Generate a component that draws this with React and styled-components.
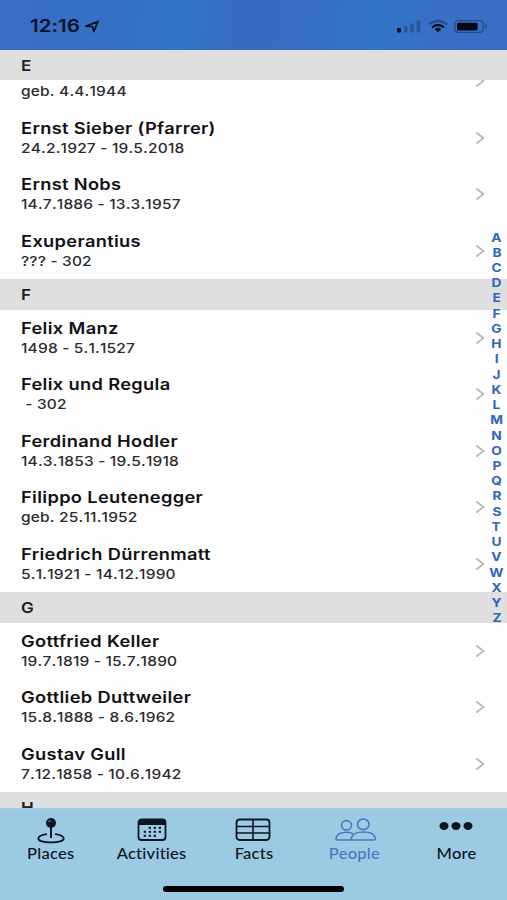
import React from "react";
import styled, { createGlobalStyle } from "styled-components";

const GlobalStyle = createGlobalStyle`
  * { box-sizing: border-box; }
  body { margin: 0; background: #fefefe; }
`;

const Screen = styled.div`
  width: 507px;
  height: 900px;
  display: flex;
  flex-direction: column;
  overflow: hidden;
  background: #fefefe;
  font-family: Inter, "Liberation Sans", sans-serif;
  font-variant-ligatures: none;
`;

const StatusBar = styled.header`
  flex: none;
  height: 49.5px;
  display: flex;
  justify-content: space-between;
  padding: 0 19px 0 30px;
  background: linear-gradient(100deg, #3a6fc6 0%, #356fc4 22%, #3275c6 36%, #386bc0 48%, #376dc2 60%, #3275c6 74%, #386fc4 85%, #3a6cc4 100%);
`;

const Clock = styled.div`
  display: flex;
  padding-top: 15px;
  gap: 14px;
  color: #06122a;
`;

const Time = styled.span`
  font-size: 17px;
  line-height: 23px;
  font-weight: 600;
  transform: scaleX(1.21);
  transform-origin: left;
`;

const StatusIcon = styled.svg`
  display: block;
  flex: none;
`;

const List = styled.main`
  position: relative;
  flex: none;
  height: 758.5px;
  overflow: hidden;
`;

const SectionHeader = styled.h2`
  margin: 0;
  height: 30.8px;
  padding-left: 21px;
  background: #dfdfdf;
  color: #202022;
  font-size: 15px;
  line-height: 32.5px;
  font-weight: 600;
`;

const Stretch = styled.span`
  display: inline-block;
  transform: scaleX(${(p) => p.$x});
  transform-origin: ${(p) => p.$origin || "left"};
  white-space: pre;
`;

const Row = styled.div`
  height: ${(p) => (p.$partial ? "29.2px" : "56.45px")};
  display: flex;
  align-items: flex-end;
  justify-content: space-between;
  padding: 0 22px 0 21px;
  overflow: hidden;
`;

const Person = styled.div`
  padding-bottom: 8px;
`;

const Name = styled.div`
  color: #111113;
  font-size: 16px;
  line-height: 20px;
  font-weight: 600;
  letter-spacing: 0.3px;
`;

const Dates = styled.div`
  color: #2b2b2d;
  font-size: 13.6px;
  line-height: 20px;
  font-weight: 450;
  font-kerning: none;
  letter-spacing: 0.16px;
`;

const Chevron = styled.svg`
  flex: none;
  display: block;
  margin-bottom: 21px;
`;

const LetterIndex = styled.nav`
  position: absolute;
  top: 180px;
  right: 0;
  width: 21px;
  display: flex;
  flex-direction: column;
  align-items: center;
  color: #2f66bd;
  font-size: 12px;
  line-height: 15.24px;
  font-weight: 650;
`;

const TabBar = styled.footer`
  flex: none;
  height: 92px;
  background: #9dcae3;
  border-top: 1px solid #a9cde3;
  font-family: Lato, "Liberation Sans", sans-serif;
`;

const Tabs = styled.nav`
  display: grid;
  grid-template-columns: repeat(5, 1fr);
  height: 76.5px;
`;

const Tab = styled.div`
  display: flex;
  flex-direction: column;
  align-items: center;
  color: ${(p) => (p.$active ? "#4579c5" : "#0b1722")};
  padding-top: 7px;
`;

const TabIcon = styled.svg`
  display: block;
  fill: none;
  stroke: currentColor;
  stroke-width: 1.8;
`;

const TabLabel = styled.span`
  font-size: 14.5px;
  line-height: 19px;
  font-weight: 500;
  letter-spacing: 0.2px;
`;

const HomeIndicator = styled.div`
  width: 181px;
  height: 6px;
  margin: 0 auto;
  border-radius: 3px;
  background: #000;
`;

const sections = [
  {
    letter: "E",
    people: [
      [null, "geb. 4.4.1944"],
      ["Ernst Sieber (Pfarrer)", "24.2.1927 - 19.5.2018"],
      ["Ernst Nobs", "14.7.1886 - 13.3.1957"],
      ["Exuperantius", "??? - 302"],
    ],
  },
  {
    letter: "F",
    people: [
      ["Felix Manz", "1498 - 5.1.1527"],
      ["Felix und Regula", " - 302"],
      ["Ferdinand Hodler", "14.3.1853 - 19.5.1918"],
      ["Filippo Leutenegger", "geb. 25.11.1952"],
      ["Friedrich Dürrenmatt", "5.1.1921 - 14.12.1990"],
    ],
  },
  {
    letter: "G",
    people: [
      ["Gottfried Keller", "19.7.1819 - 15.7.1890"],
      ["Gottlieb Duttweiler", "15.8.1888 - 8.6.1962"],
      ["Gustav Gull", "7.12.1858 - 10.6.1942"],
    ],
  },
  { letter: "H", people: [] },
];

function PersonRow({ name, dates }) {
  return (
    <Row $partial={!name}>
      <Person>
        {name && (
          <Name>
            <Stretch $x={1.14}>{name}</Stretch>
          </Name>
        )}
        <Dates>
          <Stretch $x={1.14}>{dates}</Stretch>
        </Dates>
      </Person>
      <Chevron width="10" height="14" viewBox="0 0 10 14">
        <path d="M1.3 1.5 8.3 7 1.3 12.5" fill="none" stroke="#b9b9bb" strokeWidth="1.9" />
      </Chevron>
    </Row>
  );
}

const calendarDots = [
  [19, 10], [24, 10], [29, 10],
  [14, 14], [19, 14], [24, 14], [29, 14],
  [14, 18], [19, 18], [24, 18],
];

const icons = {
  Places: (
    <>
      <circle cx="21" cy="7" r="5" fill="currentColor" stroke="none" />
      <path d="M21 11v11" strokeWidth="2" />
      <path d="M17 18.2c-5.200.7-8.700 2.300-8.700 4.300 0 2.500 5.700 3.900 12.700 3.900s12.700-1.400 12.700-3.900c0-2-3.500-3.600-8.700-4.300" />
      <ellipse cx="19.500" cy="5.300" rx="1.300" ry=".8" fill="#6b8998" stroke="none" />
    </>
  ),
  Activities: (
    <>
      <rect x="7.500" y="3.500" width="27" height="20.500" rx="3" />
      <path d="M7.500 9V6q0-2.500 3-2.500h21q3 0 3 2.500v3z" fill="currentColor" stroke="none" />
      {calendarDots.map(([x, y]) => (
        <rect key={`${x}-${y}`} x={x - 1.3} y={y + 0.8} width="2.300" height="2" fill="currentColor" stroke="none" />
      ))}
    </>
  ),
  Facts: (
    <>
      <rect x="4.500" y="3.500" width="33" height="20.500" rx="3.200" />
      <path d="M4.500 10.500h33M4.500 17h33M21 3.500V24" strokeWidth="1.600" />
    </>
  ),
  People: (
    <g strokeWidth="1.600">
      <ellipse cx="12.500" cy="9.300" rx="5" ry="4.700" />
      <ellipse cx="29.300" cy="8.300" rx="5.800" ry="5.300" />
      <path d="M17 24H4Q1.500 24 2 22C3 18.500 7 16.200 12.500 16.200c2.600 0 4.800.6 6.500 1.600" />
      <path d="M18.500 24h21.200q2 0 1.600-2C40.300 18.300 35.500 16 29.500 16s-11 2.300-12.200 6q-.5 2 1.200 2z" />
    </g>
  ),
  More: (
    <g fill="currentColor" stroke="none">
      <ellipse cx="9" cy="10" rx="4.500" ry="4" />
      <ellipse cx="21" cy="10" rx="4.500" ry="4" />
      <ellipse cx="33" cy="10" rx="4.500" ry="4" />
    </g>
  ),
};

export default function App() {
  return (
    <Screen>
      <GlobalStyle />
      <StatusBar>
        <Clock>
          <Time>12:16</Time>
          <StatusIcon width="15" height="24" viewBox="0 0 15 24">
            <path d="M1 11.200 13 6.500 8.800 16.500 7.600 11.600z" fill="none" stroke="currentColor" strokeWidth="1.800" strokeLinejoin="round" />
          </StatusIcon>
        </Clock>
        <StatusIcon width="91" height="49" viewBox="0 0 91 49">
          <rect x="0" y="28" width="4" height="4.500" rx="1" fill="#06122a" />
          <g fill="#285597">
            <rect x="7" y="26" width="3.500" height="6.500" rx="1" />
            <rect x="13.300" y="23.500" width="3.500" height="9" rx="1" />
            <rect x="19.700" y="20.500" width="3.500" height="12" rx="1" />
          </g>
          <g fill="none" strokeWidth="2.200">
            <path d="M32 24.500Q41 17.500 50 24.500" stroke="#234f8e" />
            <path d="M35 27.300Q41 22.700 47 27.300" stroke="#06122a" />
          </g>
          <path d="M37.700 29.200Q41 26.500 44.300 29.200L41 32.300z" fill="#06122a" />
          <rect x="57.800" y="20.700" width="28.500" height="11.600" rx="3.500" fill="none" stroke="#254b87" strokeWidth="1.300" />
          <rect x="60" y="22.700" width="20.500" height="7.700" rx="1.500" fill="#030815" />
          <path d="M88 24.300q2 .5 2 2.200t-2 2.200z" fill="#254b87" />
        </StatusIcon>
      </StatusBar>
      <List>
        {sections.map(({ letter, people }) => (
          <section key={letter}>
            <SectionHeader>
              <Stretch $x={1.14}>{letter}</Stretch>
            </SectionHeader>
            {people.map(([name, dates]) => (
              <PersonRow key={dates} name={name} dates={dates} />
            ))}
          </section>
        ))}
        <LetterIndex>
          {[..."ABCDEFGHIJKLMNOPQRSTUVWXYZ"].map((letter) => (
            <Stretch key={letter} $x={1.14} $origin="center">
              {letter}
            </Stretch>
          ))}
        </LetterIndex>
      </List>
      <TabBar>
        <Tabs>
          {Object.entries(icons).map(([label, drawing]) => (
            <Tab key={label} $active={label === "People"}>
              <TabIcon width="42" height="28" viewBox="0 0 42 28">
                {drawing}
              </TabIcon>
              <TabLabel>
                <Stretch $x={1.14} $origin="center">
                  {label}
                </Stretch>
              </TabLabel>
            </Tab>
          ))}
        </Tabs>
        <HomeIndicator />
      </TabBar>
    </Screen>
  );
}
